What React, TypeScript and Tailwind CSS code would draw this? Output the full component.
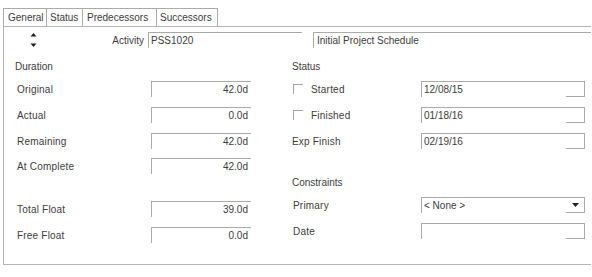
import React from "react";

const font = { fontFamily: '"Liberation Sans", Arial, sans-serif' };

function NumField({ value }: { value: string }) {
  return (
    <div className="w-[100px] h-[16px] border-t border-l border-[#aaaaaa] flex items-center justify-end pr-[3px] text-[10px] text-[#3c3c3c]">
      {value}
    </div>
  );
}

function DateField({ value, arrow }: { value: string; arrow?: boolean }) {
  return (
    <div className="w-[164px] h-[16px] border-t border-l border-r border-[#aaaaaa] flex">
      <div className="flex-1 flex items-center pl-[2px] text-[10px] text-[#3c3c3c]">{value}</div>
      <div className="w-[18px] h-full border-b border-[#aaaaaa] flex items-center justify-center">
        {arrow ? (
          <svg width="7" height="4" viewBox="0 0 7 4">
            <path d="M0 0 H7 L3.5 4 Z" fill="#222" />
          </svg>
        ) : null}
      </div>
    </div>
  );
}

function LeftRow({ label, value, mt }: { label: string; value: string; mt: string }) {
  return (
    <div className={`flex items-center h-[16px] ${mt}`}>
      <div className="w-[147px] pl-[13px] text-[10px] text-[#3c3c3c] tracking-[0.2px]">{label}</div>
      <NumField value={value} />
    </div>
  );
}

export default function App() {
  return (
    <div className="w-[592px] h-[277px] bg-white pt-[8px] pl-[3px] overflow-hidden" style={font}>
      {/* Tabs */}
      <div className="flex h-[18px] text-[10px] text-[#3c3c3c]">
        <div className="w-[44px] border-l border-t border-r border-[#aaaaaa] flex items-center pl-[4px]">General</div>
        <div className="w-[36px] border-t border-r border-[#aaaaaa] flex items-center pl-[3px]">Status</div>
        <div className="w-[74px] border-t border-r border-[#aaaaaa] flex items-center pl-[4px]">Predecessors</div>
        <div className="w-[61px] border-t border-r border-[#aaaaaa] flex items-center pl-[3px]">Successors</div>
      </div>
      {/* Panel */}
      <div className="w-[588px] h-[239px] border-l border-t border-b border-[#b4b4b4] pt-[5px]">
        {/* Top row */}
        <div className="flex items-center h-[16px]">
          <div className="w-[141px] flex items-center justify-between">
            <svg className="ml-[26px]" width="7" height="16" viewBox="0 0 7 16">
              <path d="M3.5 1 L6.5 4.5 H0.5 Z" fill="#222" />
              <path d="M0.5 11.5 H6.5 L3.5 15 Z" fill="#222" />
            </svg>
            <span className="text-[10px] text-[#3c3c3c] mr-[1px]">Activity</span>
          </div>
          <div className="ml-[3px] w-[154px] h-[16px] border-t border-l border-[#aaaaaa] flex items-center pl-[2px] text-[10px] text-[#3c3c3c]">
            PSS1020
          </div>
          <div className="ml-[11px] flex-1 h-[16px] border-t border-l border-[#aaaaaa] flex items-center pl-[3px] text-[10px] text-[#3c3c3c]">
            Initial Project Schedule
          </div>
        </div>

        <div className="flex">
          {/* Left column */}
          <div className="w-[286px]">
            <div className="mt-[12px] h-[12px] flex items-center pl-[11px] text-[10px] text-[#3c3c3c]">Duration</div>
            <LeftRow label="Original" value="42.0d" mt="mt-[9px]" />
            <LeftRow label="Actual" value="0.0d" mt="mt-[10px]" />
            <LeftRow label="Remaining" value="42.0d" mt="mt-[10px]" />
            <LeftRow label="At Complete" value="42.0d" mt="mt-[9px]" />
            <LeftRow label="Total Float" value="39.0d" mt="mt-[27px]" />
            <LeftRow label="Free Float" value="0.0d" mt="mt-[10px]" />
          </div>
          {/* Right column */}
          <div className="flex-1 pl-[2px]">
            <div className="mt-[12px] h-[12px] flex items-center text-[10px] text-[#3c3c3c]">Status</div>
            <div className="mt-[9px] h-[16px] flex items-center">
              <div className="w-[129px] flex items-center text-[10px] text-[#3c3c3c] tracking-[0.2px]">
                <div className="ml-[1px] w-[10px] h-[10px] border-t border-l border-[#a8a8a8]" />
                <span className="ml-[8px]">Started</span>
              </div>
              <DateField value="12/08/15" />
            </div>
            <div className="mt-[10px] h-[16px] flex items-center">
              <div className="w-[129px] flex items-center text-[10px] text-[#3c3c3c] tracking-[0.2px]">
                <div className="ml-[1px] w-[10px] h-[10px] border-t border-l border-[#a8a8a8]" />
                <span className="ml-[8px]">Finished</span>
              </div>
              <DateField value="01/18/16" />
            </div>
            <div className="mt-[10px] h-[16px] flex items-center">
              <div className="w-[129px] text-[10px] text-[#3c3c3c] tracking-[0.2px]">Exp Finish</div>
              <DateField value="02/19/16" />
            </div>
            <div className="mt-[27px] h-[12px] flex items-center text-[10px] text-[#3c3c3c]">Constraints</div>
            <div className="mt-[9px] h-[16px] flex items-center">
              <div className="w-[129px] pl-[1px] text-[10px] text-[#3c3c3c] tracking-[0.2px]">Primary</div>
              <DateField value="< None >" arrow />
            </div>
            <div className="mt-[10px] h-[16px] flex items-center">
              <div className="w-[129px] pl-[1px] text-[10px] text-[#3c3c3c] tracking-[0.2px]">Date</div>
              <DateField value="" />
            </div>
          </div>
        </div>
      </div>
    </div>
  );
}
